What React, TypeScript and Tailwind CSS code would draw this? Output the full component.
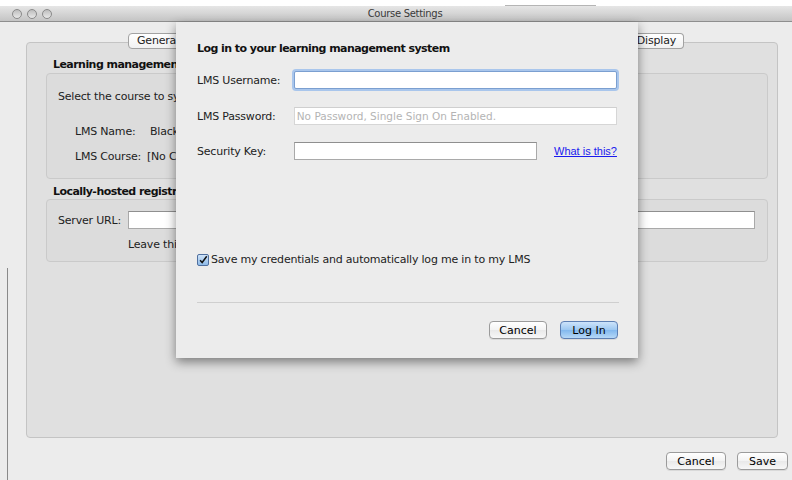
import React from "react";

const font = "font-['DejaVu_Sans','Liberation_Sans',sans-serif]";
const txt = "text-[11px] leading-[15px] tracking-[-0.2px]";
const bold = "text-[11px] leading-[15px] font-bold tracking-[-0.55px] text-[#111]";

function AquaButton({
  label,
  primary,
  className,
}: {
  label: string;
  primary?: boolean;
  className?: string;
}) {
  return (
    <div
      className={`flex h-[18px] items-center justify-center rounded-[4px] border text-[11px] leading-none ${
        primary
          ? "border-[#5d7fb3] bg-[linear-gradient(#cde3fa,#9cc7f1_50%,#82b8ee_51%,#b6d8f7)] text-black"
          : "border-[#9b9b9b] bg-[linear-gradient(#ffffff,#f3f3f3_50%,#e9e9e9_51%,#f7f7f7)] text-black"
      } shadow-[0_1px_0_rgba(0,0,0,0.08)] ${className ?? ""}`}
    >
      {label}
    </div>
  );
}

function Field({ className, focused, placeholder }: { className?: string; focused?: boolean; placeholder?: string }) {
  return (
    <div
      className={`h-[18px] border bg-white px-[2px] text-[10.5px] leading-[16px] ${
        focused
          ? "rounded-[2px] border-[#7b9fd0] shadow-[0_0_0_2px_#a9c6ec]"
          : placeholder
            ? "border-[#d6d6d6] border-t-[#cfcfcf]"
            : "border-[#a9a9a9] border-t-[#8f8f8f]"
      } ${className ?? ""}`}
    >
      {placeholder && <span className="text-[#b4b4b4]">{placeholder}</span>}
    </div>
  );
}

function CheckBox() {
  return (
    <div className="flex h-[12px] w-[12px] items-center justify-center rounded-[2px] border border-[#4f6f9f] bg-[linear-gradient(#cfe3f8,#8ebbe9)]">
      <svg viewBox="0 0 12 12" className="h-[12px] w-[12px]">
        <path d="M2.5 6.2 L5 9 L10.5 1.5" fill="none" stroke="#111" strokeWidth="1.8" />
      </svg>
    </div>
  );
}

function LoginSheet() {
  return (
    <div className="absolute left-[176px] top-[22px] flex h-[336px] w-[462px] flex-col bg-[#ececec] px-[21px] pt-[19px] shadow-[0_4px_10px_rgba(0,0,0,0.45)]">
      <div className={bold}>Log in to your learning management system</div>
      <div className="mt-[15px] flex items-center">
        <span className={`w-[97px] ${txt}`}>LMS Username:</span>
        <Field focused className="w-[324px]" />
      </div>
      <div className="mt-[18px] flex items-center">
        <span className={`w-[97px] ${txt}`}>LMS Password:</span>
        <Field className="w-[324px]" placeholder="No Password, Single Sign On Enabled." />
      </div>
      <div className="mt-[17px] flex items-center">
        <span className={`w-[97px] ${txt}`}>Security Key:</span>
        <Field className="w-[243px]" />
        <span className="ml-[17px] whitespace-nowrap font-['Liberation_Sans',sans-serif] text-[11px] text-[#1a1aee] underline">
          What is this?
        </span>
      </div>
      <div className="mt-[92px] flex items-center gap-[2px]">
        <CheckBox />
        <span className={txt}>Save my credentials and automatically log me in to my LMS</span>
      </div>
      <div className="mt-[35px] h-px w-[422px] bg-[#cfcfcf]" />
      <div className="mt-[18px] flex w-[421px] justify-end gap-[13px]">
        <AquaButton label="Cancel" className="w-[58px]" />
        <AquaButton label="Log In" primary className="w-[58px]" />
      </div>
    </div>
  );
}

export default function App() {
  return (
    <div className={`relative h-[480px] w-[792px] overflow-hidden bg-white text-[#222] ${font}`}>
      {/* top strip behind the window */}
      <div className="flex h-[6px] items-end bg-white">
        <div className="ml-[505px] h-px w-[91px] bg-[#b5b5b5]" />
      </div>

      {/* title bar */}
      <div className="relative flex h-[16px] items-center border-b border-[#8e8e8e] bg-[linear-gradient(#e6e6e6,#c4c4c4)]">
        <div className="ml-[12px] flex gap-[5px]">
          {[0, 1, 2].map((i) => (
            <div key={i} className="h-[10px] w-[10px] rounded-full border border-[#8a8a8a] bg-[linear-gradient(#bdbdbd,#e8e8e8)]" />
          ))}
        </div>
        <div className="absolute left-0 right-0 top-0 flex h-[15px] items-center justify-center pl-[18px] text-[10px] tracking-[-0.3px] text-[#3a3a3a]">
          Course Settings
        </div>
      </div>

      {/* window body */}
      <div className="relative h-[458px] bg-[#ececec] pl-[26px] pr-[14px] pt-[11px]">
        <div className="absolute left-[7px] top-[246px] h-[212px] w-px bg-[#8a8a8a]" />

        {/* tab control */}
        <div className="relative flex flex-col">
          <div className="absolute left-[102px] top-0 flex h-[16px] w-[556px] text-[11px] tracking-[-0.2px]">
            <div className="flex flex-1 items-center rounded-l-[4px] border border-[#a2a2a2] bg-[linear-gradient(#ffffff,#f1f1f1)] pl-[8px]">
              General
            </div>
            <div className="flex flex-1 items-center justify-end rounded-r-[4px] border border-l-0 border-[#a2a2a2] bg-[linear-gradient(#ffffff,#f1f1f1)] pr-[7px]">
              Display
            </div>
          </div>
          <div className="mt-[9px] h-[396px] w-[752px] rounded-[4px] border border-[#c4c4c4] bg-[#e0e0e0] pl-[19px] pr-[9px] pt-[14px]">
            <div className={`pl-[7px] ${bold}`}>Learning management system</div>
            <div className={`mt-px h-[106px] rounded-[4px] border border-[#cacaca] bg-[#dcdcdc] pl-[11px] pt-[15px] ${txt}`}>
              <div>Select the course to synchronize with</div>
              <div className="mt-[20px] flex pl-[17px]">
                <span className="w-[75px]">LMS Name:</span>
                <span>Blackboard</span>
              </div>
              <div className="mt-[10px] flex pl-[17px]">
                <span className="w-[72px]">LMS Course:</span>
                <span>[No Course Selected]</span>
              </div>
            </div>
            <div className={`mt-[5px] pl-[7px] ${bold}`}>Locally-hosted registration</div>
            <div className={`h-[63px] rounded-[4px] border border-[#cacaca] bg-[#dcdcdc] pl-[11px] pt-[11px] ${txt}`}>
              <div className="flex items-center">
                <span className="w-[70px]">Server URL:</span>
                <Field className="w-[627px]" />
              </div>
              <div className="mt-[8px] pl-[70px]">Leave this blank to use the default server</div>
            </div>
          </div>
        </div>

        {/* window buttons */}
        <div className="mt-[14px] flex justify-end gap-[11px]">
          <AquaButton label="Cancel" className="w-[60px]" />
          <AquaButton label="Save" className="mr-[-10px] w-[51px]" />
        </div>
      </div>

      <LoginSheet />
    </div>
  );
}
